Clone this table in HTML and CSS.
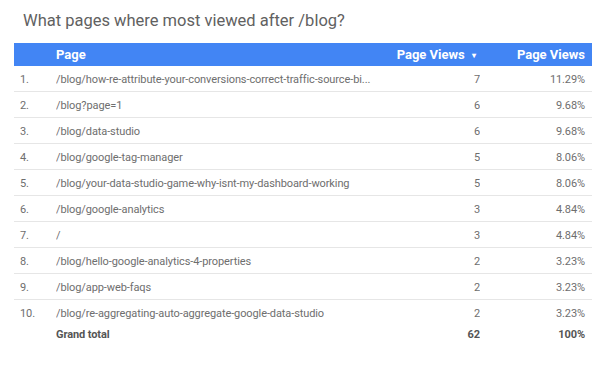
FILE: index.html
```html
<!DOCTYPE html>
<html>
<head>
<meta charset="utf-8">
<link rel="stylesheet" href="styles.css">
</head>
<body>
<div class="card">
  <h1 class="title">What pages where most viewed after /blog?</h1>
  <table class="tbl">
    <colgroup>
      <col class="c-num"><col class="c-page"><col class="c-views"><col class="c-pct">
    </colgroup>
    <thead>
      <tr>
        <th class="num"></th>
        <th class="page">Page</th>
        <th class="views">Page Views <span class="arrow">&#9662;</span></th>
        <th class="pct">Page Views</th>
      </tr>
    </thead>
    <tbody>
      <tr><td class="num">1.</td><td class="page">/blog/how-re-attribute-your-conversions-correct-traffic-source-bi...</td><td class="views">7</td><td class="pct">11.29%</td></tr>
      <tr><td class="num">2.</td><td class="page">/blog?page=1</td><td class="views">6</td><td class="pct">9.68%</td></tr>
      <tr><td class="num">3.</td><td class="page">/blog/data-studio</td><td class="views">6</td><td class="pct">9.68%</td></tr>
      <tr><td class="num">4.</td><td class="page">/blog/google-tag-manager</td><td class="views">5</td><td class="pct">8.06%</td></tr>
      <tr><td class="num">5.</td><td class="page">/blog/your-data-studio-game-why-isnt-my-dashboard-working</td><td class="views">5</td><td class="pct">8.06%</td></tr>
      <tr><td class="num">6.</td><td class="page">/blog/google-analytics</td><td class="views">3</td><td class="pct">4.84%</td></tr>
      <tr><td class="num">7.</td><td class="page">/</td><td class="views">3</td><td class="pct">4.84%</td></tr>
      <tr><td class="num">8.</td><td class="page">/blog/hello-google-analytics-4-properties</td><td class="views">2</td><td class="pct">3.23%</td></tr>
      <tr><td class="num">9.</td><td class="page">/blog/app-web-faqs</td><td class="views">2</td><td class="pct">3.23%</td></tr>
      <tr class="last"><td class="num">10.</td><td class="page">/blog/re-aggregating-auto-aggregate-google-data-studio</td><td class="views">2</td><td class="pct">3.23%</td></tr>
    </tbody>
    <tfoot>
      <tr><td class="num"></td><td class="page">Grand total</td><td class="views">62</td><td class="pct">100%</td></tr>
    </tfoot>
  </table>
</div>
</body>
</html>
```
FILE: styles.css
```css
html, body {
  margin: 0;
  padding: 0;
  background: #ffffff;
}
body {
  font-family: Roboto, "Noto Sans", Arial, sans-serif;
  width: 614px;
  height: 366px;
  overflow: hidden;
}
.card {
  padding: 10px 22px 0 14px;
}
.title {
  margin: 0 0 11px 9px;
  font-size: 16.5px;
  font-weight: 400;
  color: #616161;
  line-height: 22px;
}
.tbl {
  width: 578px;
  border-collapse: collapse;
  table-layout: fixed;
  font-size: 11px;
  letter-spacing: -0.1px;
  color: #6e6e6e;
}
.c-num { width: 42px; }
.c-page { width: auto; }
.c-views { width: 100px; }
.c-pct { width: 112px; }
.tbl th {
  background: #4285f4;
  color: #ffffff;
  font-weight: 700;
  font-size: 13px;
  letter-spacing: 0;
  height: 23px;
  padding: 0;
  text-align: left;
}
.tbl th.views, .tbl th.pct { text-align: right; }
.tbl th.views { padding-right: 4px; }
.tbl th.pct { padding-right: 7px; }
.arrow {
  font-size: 8px;
  margin-left: 4px;
  position: relative;
  top: -1px;
}
.tbl td {
  height: 23px;
  padding: 2px 0 0 0;
  white-space: nowrap;
  overflow: hidden;
  border-bottom: 1px solid #e6e6e6;
}
.tbl tr.last td { border-bottom: none; }
.tbl td.num { padding-left: 6px; }
.tbl td.views { text-align: right; padding-right: 0; }
.tbl td.pct { text-align: right; padding-right: 7px; }
.tbl tfoot td {
  height: 14px;
  border-bottom: none;
  font-weight: 700;
  color: #555555;
}
```
